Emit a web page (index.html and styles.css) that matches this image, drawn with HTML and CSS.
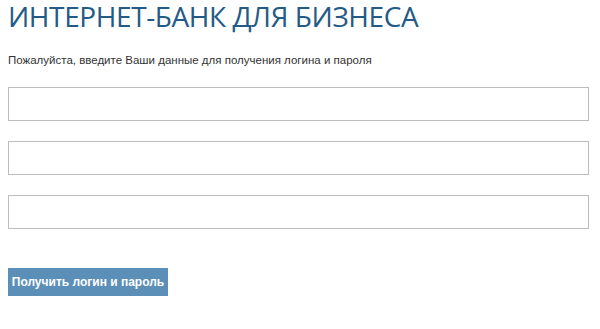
FILE: index.html
```html
<!DOCTYPE html>
<html lang="ru">
<head>
    <meta charset="UTF-8">
    <title>Интернет-банк для бизнеса</title>
    <link rel="stylesheet" href="styles.css">
</head>
<body>
    <div class="page">
        <h1 class="title">ИНТЕРНЕТ-БАНК ДЛЯ БИЗНЕСА</h1>
        <p class="hint">Пожалуйста, введите Ваши данные для получения логина и пароля</p>
        <form class="form">
            <input class="field" type="text">
            <input class="field" type="text">
            <input class="field" type="text">
            <button class="btn" type="button">Получить логин и пароль</button>
        </form>
    </div>
</body>
</html>
```

FILE: styles.css
```css
* {
    margin: 0;
    padding: 0;
    box-sizing: border-box;
}

body {
    background: #fff;
    font-family: "Liberation Sans", Arial, sans-serif;
}

.page {
    padding: 0 11px 0 8px;
}

.title {
    font-family: "Open Sans", sans-serif;
    font-weight: 400;
    font-size: 28px;
    line-height: 33px;
    color: #245b86;
    letter-spacing: -0.4px;
}

.hint {
    margin-top: 20px;
    font-size: 11.5px;
    line-height: 14px;
    color: #333;
}

.form {
    display: flex;
    flex-direction: column;
    align-items: flex-start;
    gap: 20px;
    margin-top: 20px;
}

.field {
    width: 100%;
    height: 34px;
    border: 1px solid #bdbdbd;
    background: #fff;
}

.btn {
    margin-top: 19px;
    width: 160px;
    height: 28px;
    border: none;
    background: #5b8fb8;
    color: #fff;
    font-family: "Liberation Sans", Arial, sans-serif;
    font-weight: bold;
    font-size: 12px;
}
```
